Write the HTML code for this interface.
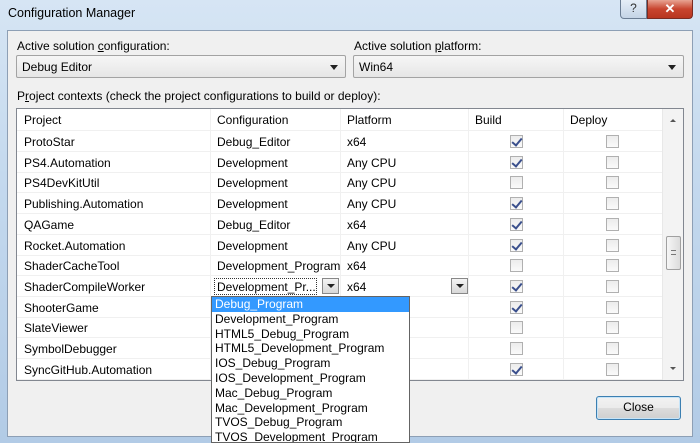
<!DOCTYPE html>
<html><head><meta charset="utf-8"><style>
*{box-sizing:border-box;margin:0;padding:0}
body{width:700px;height:443px;overflow:hidden;font-family:"Liberation Sans",sans-serif;font-size:12px;color:#000;position:relative;background:linear-gradient(180deg,#d6e5f4 0%,#c4d9ee 40%,#b2cbe6 100%)}
.abs{position:absolute}
.title{left:8px;top:6px;font-size:12.5px}
.hbtn{left:620px;top:0;width:27px;height:19px;border:1px solid #6b7d93;border-top:none;border-radius:0 0 0 4px;background:linear-gradient(#e6eef7,#c4d4e6);text-align:center;font-size:12px;color:#333;line-height:17px}
.xbtn{left:647px;top:0;width:46px;height:19px;border:1px solid #7a2b22;border-top:none;border-radius:0 0 4px 0;background:linear-gradient(#e8a493,#c8452f 50%,#b83520);text-align:center;color:#fff;font-weight:bold;font-size:13px;line-height:17px}
.panel{left:7px;top:30px;width:686px;height:407px;background:#f0f0f0;border:1px solid #8d9fb5}
.lbl{font-size:12px}
.combo{height:23px;border:1px solid #a3a3a3;border-radius:2px;background:linear-gradient(#f6f6f6,#e6e6e6);padding:4px 5px;font-size:12px}
.combo:after{content:"";position:absolute;right:7px;top:9px;border:4px solid transparent;border-top:5px solid #222}
.grid{left:16px;top:108px;width:668px;height:273px;background:#fff;border:1px solid #828790;overflow:hidden}
.row{position:absolute;left:0;width:646px;height:21px;border-bottom:1px solid #f0f0f0}
.row span{position:absolute;top:4px}
.vl{position:absolute;top:0;width:1px;height:273px;background:#f0f0f0}
.cb{position:absolute;width:13px;height:13px;border:1px solid #b0b0b0;background:linear-gradient(#ececec,#fafafa);top:4px}
.cb.c:after{content:"";position:absolute;left:3px;top:0px;width:4px;height:8px;border:solid #3a4f8c;border-width:0 2px 2px 0;transform:rotate(40deg)}
.sb{left:645px;top:0;width:21px;height:271px;background:#f3f3f3;border-left:1px solid #e8e8e8}
.dd{left:211px;top:296px;width:199px;height:147px;background:#fff;border:1px solid #646464;overflow:hidden}
.dd div{height:14.8px;line-height:14.8px;padding-left:3px;font-size:12px;white-space:nowrap}
.close{left:596px;top:396px;width:85px;height:24px;border:1px solid #3c7fb1;border-radius:3px;background:linear-gradient(#f2f2f2 0%,#ebebeb 50%,#dcdcdc 51%,#cfcfcf 100%);text-align:center;line-height:21px;box-shadow:inset 0 0 0 1px #c6e4f8}
</style></head><body>
<div class="abs title">Configuration Manager</div>
<div class="abs hbtn">?</div>
<div class="abs xbtn">✕</div>
<div class="abs panel"></div>
<div class="abs lbl" style="left:17px;top:39px">Active solution <u>c</u>onfiguration:</div>
<div class="abs lbl" style="left:354px;top:39px">Active solution <u>p</u>latform:</div>
<div class="abs combo" style="left:16px;top:55px;width:330px">Debug Editor</div>
<div class="abs combo" style="left:353px;top:55px;width:331px">Win64</div>
<div class="abs lbl" style="left:17px;top:89px">P<u>r</u>oject contexts (check the project configurations to build or deploy):</div>
<div class="abs grid">
<div class="vl" style="left:193px"></div><div class="vl" style="left:323px"></div><div class="vl" style="left:451px"></div><div class="vl" style="left:546px"></div>
<div class="row" style="top:0;height:22px"><span style="left:7px">Project</span><span style="left:200px">Configuration</span><span style="left:330px">Platform</span><span style="left:458px">Build</span><span style="left:553px">Deploy</span></div>
<div class="row" style="top:22px"><span style="left:7px">ProtoStar</span><span style="left:200px">Debug_Editor</span><span style="left:330px">x64</span><i class="cb c" style="left:493px"></i><i class="cb" style="left:589px"></i></div>
<div class="row" style="top:42.7px"><span style="left:7px">PS4.Automation</span><span style="left:200px">Development</span><span style="left:330px">Any CPU</span><i class="cb c" style="left:493px"></i><i class="cb" style="left:589px"></i></div>
<div class="row" style="top:63.4px"><span style="left:7px">PS4DevKitUtil</span><span style="left:200px">Development</span><span style="left:330px">Any CPU</span><i class="cb" style="left:493px"></i><i class="cb" style="left:589px"></i></div>
<div class="row" style="top:84.1px"><span style="left:7px">Publishing.Automation</span><span style="left:200px">Development</span><span style="left:330px">Any CPU</span><i class="cb c" style="left:493px"></i><i class="cb" style="left:589px"></i></div>
<div class="row" style="top:104.8px"><span style="left:7px">QAGame</span><span style="left:200px">Debug_Editor</span><span style="left:330px">x64</span><i class="cb c" style="left:493px"></i><i class="cb" style="left:589px"></i></div>
<div class="row" style="top:125.5px"><span style="left:7px">Rocket.Automation</span><span style="left:200px">Development</span><span style="left:330px">Any CPU</span><i class="cb c" style="left:493px"></i><i class="cb" style="left:589px"></i></div>
<div class="row" style="top:146.2px"><span style="left:7px">ShaderCacheTool</span><span style="left:200px">Development_Program</span><span style="left:330px">x64</span><i class="cb" style="left:493px"></i><i class="cb" style="left:589px"></i></div>
<div class="row" style="top:166.9px"><span style="left:7px">ShaderCompileWorker</span>
<div style="position:absolute;left:197px;top:2px;width:103px;height:17px;border:1px dotted #333;padding:1px 2px">Development_Pr...</div>
<div style="position:absolute;left:305px;top:2px;width:17px;height:16px;border:1px solid #888;background:linear-gradient(#f4f4f4,#d8d8d8)"><i style="position:absolute;left:4px;top:5px;border:4px solid transparent;border-top:4px solid #222"></i></div>
<span style="left:330px">x64</span>
<div style="position:absolute;left:434px;top:2px;width:17px;height:16px;border:1px solid #888;background:linear-gradient(#f4f4f4,#d8d8d8)"><i style="position:absolute;left:4px;top:5px;border:4px solid transparent;border-top:4px solid #222"></i></div>
<i class="cb c" style="left:493px"></i><i class="cb" style="left:589px"></i></div>
<div class="row" style="top:187.6px"><span style="left:7px">ShooterGame</span><i class="cb c" style="left:493px"></i><i class="cb" style="left:589px"></i></div>
<div class="row" style="top:208.3px"><span style="left:7px">SlateViewer</span><i class="cb" style="left:493px"></i><i class="cb" style="left:589px"></i></div>
<div class="row" style="top:229px"><span style="left:7px">SymbolDebugger</span><i class="cb" style="left:493px"></i><i class="cb" style="left:589px"></i></div>
<div class="row" style="top:249.7px"><span style="left:7px">SyncGitHub.Automation</span><i class="cb c" style="left:493px"></i><i class="cb" style="left:589px"></i></div>
<div class="abs sb">
<i style="position:absolute;left:7px;top:7px;border:3px solid transparent;border-bottom:3px solid #555"></i>
<div style="position:absolute;left:3px;top:127px;width:15px;height:34px;border:1px solid #a0a0a0;border-radius:2px;background:linear-gradient(90deg,#f6f6f6,#dcdcdc)"><div style="position:absolute;left:4px;top:13px;width:5px;height:5px;border-top:1px solid #777;border-bottom:1px solid #777"></div></div>
<i style="position:absolute;left:7px;top:258px;border:3px solid transparent;border-top:3px solid #555"></i>
</div>
</div>
<div class="abs dd">
<div style="background:#3399ff;color:#fff">Debug_Program</div>
<div>Development_Program</div>
<div>HTML5_Debug_Program</div>
<div>HTML5_Development_Program</div>
<div>IOS_Debug_Program</div>
<div>IOS_Development_Program</div>
<div>Mac_Debug_Program</div>
<div>Mac_Development_Program</div>
<div>TVOS_Debug_Program</div>
<div>TVOS_Development_Program</div>
</div>
<div class="abs close">Close</div>
</body></html>
